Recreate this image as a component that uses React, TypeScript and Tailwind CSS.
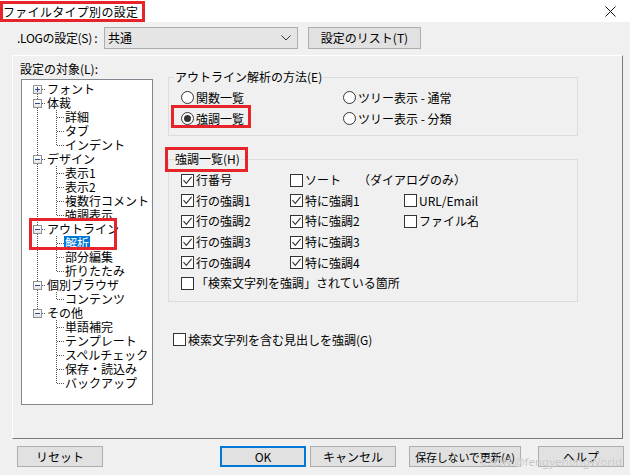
import React from "react";

const RED = "border-[#e8242b]";

function Check({ checked }: { checked?: boolean }) {
  return (
    <span className="w-[13px] h-[13px] border border-[#333333] bg-white flex items-center justify-center shrink-0">
      {checked && (
        <svg width="11" height="11" viewBox="0 0 11 11">
          <path d="M1.5 5.2 L4.3 8.3 L9.6 1.8" fill="none" stroke="#333333" strokeWidth="1.1" />
        </svg>
      )}
    </span>
  );
}

function Radio({ on }: { on?: boolean }) {
  return (
    <span className="w-[13px] h-[13px] rounded-full border border-[#333333] bg-white flex items-center justify-center shrink-0">
      {on && <span className="w-[7px] h-[7px] rounded-full bg-[#333333]" />}
    </span>
  );
}

type Node = { t: string; l: 1 | 2; box?: "+" | "-"; sel?: boolean };

const tree: Node[] = [
  { t: "フォント", l: 1, box: "+" },
  { t: "体裁", l: 1, box: "-" },
  { t: "詳細", l: 2 },
  { t: "タブ", l: 2 },
  { t: "インデント", l: 2 },
  { t: "デザイン", l: 1, box: "-" },
  { t: "表示1", l: 2 },
  { t: "表示2", l: 2 },
  { t: "複数行コメント", l: 2 },
  { t: "強調表示", l: 2 },
  { t: "アウトライン", l: 1, box: "-" },
  { t: "解析", l: 2, sel: true },
  { t: "部分編集", l: 2 },
  { t: "折りたたみ", l: 2 },
  { t: "個別ブラウザ", l: 1, box: "-" },
  { t: "コンテンツ", l: 2 },
  { t: "その他", l: 1, box: "-" },
  { t: "単語補完", l: 2 },
  { t: "テンプレート", l: 2 },
  { t: "スペルチェック", l: 2 },
  { t: "保存・読込み", l: 2 },
  { t: "バックアップ", l: 2 },
];

const ROW = 14;
const TOP = 2;
const cy = (i: number) => TOP + ROW * i + 7.5;

function TreeLines() {
  const lines: React.ReactNode[] = [];
  const parents = tree.map((n, i) => (n.l === 1 ? i : -1)).filter((i) => i >= 0);
  const first = parents[0];
  const last = parents[parents.length - 1];
  lines.push(<line key="root" x1={15.5} y1={cy(first)} x2={15.5} y2={cy(last)} />);
  parents.forEach((p, k) => {
    lines.push(<line key={"h" + p} x1={20} y1={cy(p)} x2={24} y2={cy(p)} />);
    const end = k + 1 < parents.length ? parents[k + 1] - 1 : tree.length - 1;
    if (end > p) {
      lines.push(<line key={"v" + p} x1={34.5} y1={cy(p) + 6} x2={34.5} y2={cy(end)} />);
      for (let c = p + 1; c <= end; c++) {
        lines.push(<line key={"c" + c} x1={35} y1={cy(c)} x2={42} y2={cy(c)} />);
      }
    }
  });
  return (
    <svg className="absolute left-0 top-0" width="130" height="324" stroke="#555555" strokeWidth="1" strokeDasharray="1 1" shapeRendering="crispEdges">
      {lines}
    </svg>
  );
}

function Btn({ children, w, className = "" }: { children: React.ReactNode; w: string; className?: string }) {
  return (
    <div className={`${w} h-[21px] border border-[#adadad] bg-[#e1e1e1] flex items-center justify-center whitespace-nowrap ${className}`}>
      {children}
    </div>
  );
}

export default function App() {
  return (
    <div className="relative w-[630px] h-[475px] bg-[#f0f0f0] text-[12px] leading-[14px] text-black font-['Noto_Sans_CJK_JP','Noto_Sans',sans-serif] overflow-hidden flex flex-col">
      {/* title bar */}
      <div className="h-[22px] bg-white flex items-center justify-between shrink-0">
        <div className={`h-[21px] mt-[1px] w-[145px] border-[3px] ${RED} flex items-center pl-[0px] text-[12px] tracking-[0.3px] whitespace-nowrap`}>
          ファイルタイプ別の設定
        </div>
        <svg width="11" height="11" viewBox="0 0 11 11" className="mr-[14px]">
          <path d="M0.5 0.5 L10.5 10.5 M10.5 0.5 L0.5 10.5" stroke="#111" strokeWidth="1" />
        </svg>
      </div>

      {/* LOG row */}
      <div className="flex items-center pt-[5px] h-[27px] shrink-0">
        <div className="ml-[17px] w-[87px] whitespace-nowrap tracking-[-0.3px]">.LOGの設定(S) :</div>
        <div className="w-[194px] h-[22px] border border-[#adadad] bg-[#e5e5e5] flex items-center justify-between pl-[3px] pr-[6px]">
          <span>共通</span>
          <svg width="10" height="6" viewBox="0 0 10 6">
            <path d="M0.5 0.5 L5 5 L9.5 0.5" fill="none" stroke="#333" strokeWidth="1" />
          </svg>
        </div>
        <Btn w="w-[113px]" className="ml-[10px] h-[22px]">設定のリスト(T)</Btn>
      </div>

      {/* main panel */}
      <div className="ml-[12px] mt-[6px] w-[611px] h-[384px] border-t border-l border-t-white border-l-white border-r border-b border-r-[#7a7a7a] border-b-[#7a7a7a] flex shrink-0">
        {/* left column */}
        <div className="pl-[8px] pt-[6px] flex flex-col">
          <div className="ml-[-1px]">設定の対象(L):</div>
          <div className="relative mt-[3px] w-[132px] h-[326px] border border-[#828790] bg-white overflow-hidden">
            <TreeLines />
            <div className="relative flex flex-col pt-[2px]">
              {tree.map((n, i) => (
                <div key={i} className="h-[14px] flex items-center whitespace-nowrap">
                  {n.l === 1 ? (
                    <div className="flex items-center pl-[11px]">
                      <span className="w-[9px] h-[9px] border border-[#919191] bg-gradient-to-b from-white to-[#e4e4e4] flex items-center justify-center">
                        <svg width="7" height="7" viewBox="0 0 7 7">
                          <path d="M1 3.5 H6" stroke="#2a4a9a" strokeWidth="1" shapeRendering="crispEdges" />
                          {n.box === "+" && <path d="M3.5 1 V6" stroke="#2a4a9a" strokeWidth="1" shapeRendering="crispEdges" />}
                        </svg>
                      </span>
                      <span className="ml-[5px]">{n.t}</span>
                    </div>
                  ) : n.sel ? (
                    <span className="ml-[42px] px-[1px] h-[14px] leading-[14px] bg-[#0078d7] text-white">{n.t}</span>
                  ) : (
                    <span className="ml-[43px]">{n.t}</span>
                  )}
                </div>
              ))}
            </div>
            <div className={`absolute left-[7px] top-[138px] w-[88px] h-[32px] border-[3px] ${RED}`} />
          </div>
        </div>

        {/* right column */}
        <div className="ml-[15px] pt-[14px] flex flex-col">
          <fieldset className="w-[410px] border border-[#dcdcdc] pb-[6px]">
            <legend className="ml-[5px] px-[1px] leading-[14px]">アウトライン解析の方法(E)</legend>
            <div className="pt-[3px] pl-[12px] flex flex-col">
              <div className="h-[21px] flex items-center">
                <div className="w-[162px] flex items-center gap-[2px]"><Radio /><span>関数一覧</span></div>
                <div className="flex items-center gap-[2px]"><Radio /><span>ツリー表示 - 通常</span></div>
              </div>
              <div className="h-[21px] flex items-center">
                <div className="relative w-[162px] flex items-center gap-[2px]">
                  <Radio on /><span>強調一覧</span>
                  <div className={`absolute left-[-10px] top-[-7px] w-[80px] h-[23px] border-[3px] ${RED}`} />
                </div>
                <div className="flex items-center gap-[2px]"><Radio /><span>ツリー表示 - 分類</span></div>
              </div>
            </div>
          </fieldset>

          <fieldset className="relative mt-[16px] w-[410px] border border-[#dcdcdc] pb-[7px]">
            <legend className="relative ml-[5px] px-[1px] leading-[14px]">
              強調一覧(H)
              <div className={`absolute left-[-9px] top-[-5px] w-[83px] h-[25px] border-[3px] ${RED}`} />
            </legend>
            <div className="pt-[4px] pl-[12px] flex flex-col">
              <div className="h-[20.6px] flex items-center">
                <div className="w-[109px] flex items-center gap-[2px]"><Check checked /><span>行番号</span></div>
                <div className="w-[68px] flex items-center gap-[2px]"><Check /><span>ソート</span></div>
                <span>（ダイアログのみ）</span>
              </div>
              {[1, 2, 3, 4].map((k) => (
                <div key={k} className="h-[20.6px] flex items-center">
                  <div className="w-[109px] flex items-center gap-[2px]"><Check checked /><span>行の強調{k}</span></div>
                  <div className="w-[114px] flex items-center gap-[2px]"><Check checked /><span>特に強調{k}</span></div>
                  {k === 1 && <div className="flex items-center gap-[2px]"><Check /><span>URL/Email</span></div>}
                  {k === 2 && <div className="flex items-center gap-[2px]"><Check /><span>ファイル名</span></div>}
                </div>
              ))}
              <div className="h-[20.6px] flex items-center">
                <div className="flex items-center gap-[2px]"><Check /><span>「検索文字列を強調」されている箇所</span></div>
              </div>
            </div>
          </fieldset>

          <div className="mt-[31px] ml-[5px] flex items-center gap-[2px]">
            <Check /><span>検索文字列を含む見出しを強調(G)</span>
          </div>
        </div>
      </div>

      {/* bottom buttons */}
      <div className="mt-[7px] flex items-center shrink-0">
        <Btn w="w-[86px]" className="ml-[17px]">リセット</Btn>
        <div className="ml-[117px] w-[86px] h-[21px] border-2 border-[#0078d7] bg-[#e1e1e1] flex items-center justify-center">OK</div>
        <Btn w="w-[86px]" className="ml-[4px]">キャンセル</Btn>
        <Btn w="w-[112px]" className="ml-[13px] text-[11px] tracking-[-0.2px]">保存しないで更新(A)</Btn>
        <Btn w="w-[86px]" className="ml-[17px]">ヘルプ</Btn>
      </div>

      <div className="absolute right-[8px] bottom-[6px] text-[11.5px] text-[#c4c4c4] font-['Noto_Sans',sans-serif] [text-shadow:0_0_1px_#ffffff]">
        CSDN @fengyehongWorld
      </div>
    </div>
  );
}
